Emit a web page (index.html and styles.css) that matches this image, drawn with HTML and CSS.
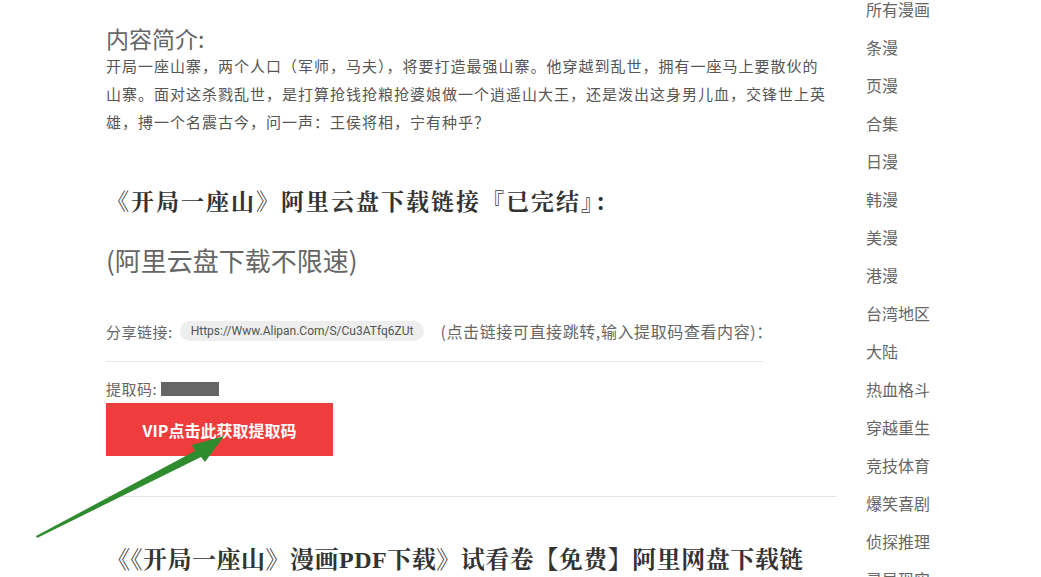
FILE: index.html
```html
<!DOCTYPE html>
<html lang="zh">
  <head>
    <meta charset="UTF-8" />
    <title>开局一座山 阿里云盘下载</title>
    <link rel="stylesheet" href="styles.css">
  </head>
  <body>
    <div class="page">
      <div class="main">
        <h3 class="intro-title">内容简介:</h3>
        <p class="intro">开局一座山寨，两个人口（军师，马夫），将要打造最强山寨。他穿越到乱世，拥有一座马上要散伙的山寨。面对这杀戮乱世，是打算抢钱抢粮抢婆娘做一个逍遥山大王，还是泼出这身男儿血，交锋世上英雄，搏一个名震古今，问一声：王侯将相，宁有种乎？</p>

        <h2 class="dl-title">《开局一座山》阿里云盘下载链接『已完结』：</h2>
        <div class="speed">(阿里云盘下载不限速)</div>

        <div class="share">
          <span class="label">分享链接:</span>
          <span class="pill">Https://Www.Alipan.Com/S/Cu3ATfq6ZUt</span>
          <span class="hint">(点击链接可直接跳转,输入提取码查看内容)：</span>
        </div>

        <div class="code-row">
          <span class="label">提取码:</span>
          <span class="mask"></span>
        </div>
        <div class="vip-btn">VIP点击此获取提取码</div>

        <hr class="sep">

        <h2 class="next-title">《《开局一座山》漫画PDF下载》试看卷【免费】阿里网盘下载链接</h2>
      </div>

      <ul class="side">
        <li>所有漫画</li>
        <li>条漫</li>
        <li>页漫</li>
        <li>合集</li>
        <li>日漫</li>
        <li>韩漫</li>
        <li>美漫</li>
        <li>港漫</li>
        <li>台湾地区</li>
        <li>大陆</li>
        <li>热血格斗</li>
        <li>穿越重生</li>
        <li>竞技体育</li>
        <li>爆笑喜剧</li>
        <li>侦探推理</li>
        <li>灵异现实</li>
      </ul>
    </div>

    <svg class="arrow" width="240" height="130" viewBox="0 0 240 130">
      <polygon points="16,116 175,31 172,25 204,16 185,42 181,37 17,118" fill="#2e8b2e" />
    </svg>
  </body>
</html>
```

FILE: styles.css
```css
body {
  margin: 0;
  background: #fff;
  font-family: "Noto Sans CJK SC", "Liberation Sans", sans-serif;
  color: #555;
  overflow: hidden;
}

.page {
  display: flex;
  padding-left: 106px;
  height: 577px;
}

.main {
  width: 730px;
  flex-shrink: 0;
  margin-top: -4px;
}

.intro-title {
  margin: 29px 0 0;
  font-size: 23px;
  font-weight: normal;
  line-height: 27px;
  color: #666;
}

.intro {
  margin: 0;
  width: 725px;
  font-size: 15px;
  letter-spacing: 1px;
  line-height: 28px;
  color: #555;
}

.dl-title,
.next-title {
  font-family: "Liberation Serif", "Noto Serif CJK SC", "Noto Sans CJK SC", serif;
  font-weight: bold;
  color: #333;
  margin: 0;
  line-height: 32px;
}

.dl-title {
  margin-top: 51px;
  font-size: 23px;
  letter-spacing: 2px;
}

.speed {
  margin-top: 25px;
  font-size: 26px;
  color: #666;
  line-height: 32px;
}

.share {
  display: flex;
  align-items: center;
  margin-top: 43px;
  width: 657px;
  padding-bottom: 18px;
  border-bottom: 1px solid #e6e6e6;
  font-size: 15px;
  color: #666;
  white-space: nowrap;
}

.share span {
  flex-shrink: 0;
}

.label {
  letter-spacing: 0.5px;
}

.pill {
  margin-left: 7px;
  padding: 3px 11px;
  background: #eee;
  border-radius: 12px;
  font-family: "Roboto", "Liberation Sans", sans-serif;
  font-size: 12px;
  color: #555;
}

.hint {
  margin-left: 16px;
  font-size: 16px;
  letter-spacing: 0.6px;
}

.code-row {
  display: flex;
  align-items: center;
  margin-top: 17px;
  font-size: 15px;
  color: #666;
  line-height: 20px;
}

.mask {
  display: inline-block;
  width: 58px;
  height: 14px;
  margin-left: 4px;
  background: #666;
}

.vip-btn {
  display: flex;
  align-items: center;
  justify-content: center;
  width: 227px;
  height: 53px;
  margin-top: 4px;
  background: #ef3d3d;
  color: #fff;
  font-size: 16px;
  font-weight: bold;
}

.sep {
  margin: 40px 0 0;
  border: none;
  border-top: 1px solid #e3e3e3;
}

.next-title {
  margin-top: 47px;
  width: 715px;
  font-size: 24px;
  letter-spacing: 0.5px;
}

.side {
  list-style: none;
  margin: -1px 0 0 30px;
  padding: 0;
  font-size: 16px;
  color: #666;
}

.side li {
  height: 38px;
  line-height: 20px;
}

.arrow {
  position: absolute;
  left: 20px;
  top: 420px;
}
```
